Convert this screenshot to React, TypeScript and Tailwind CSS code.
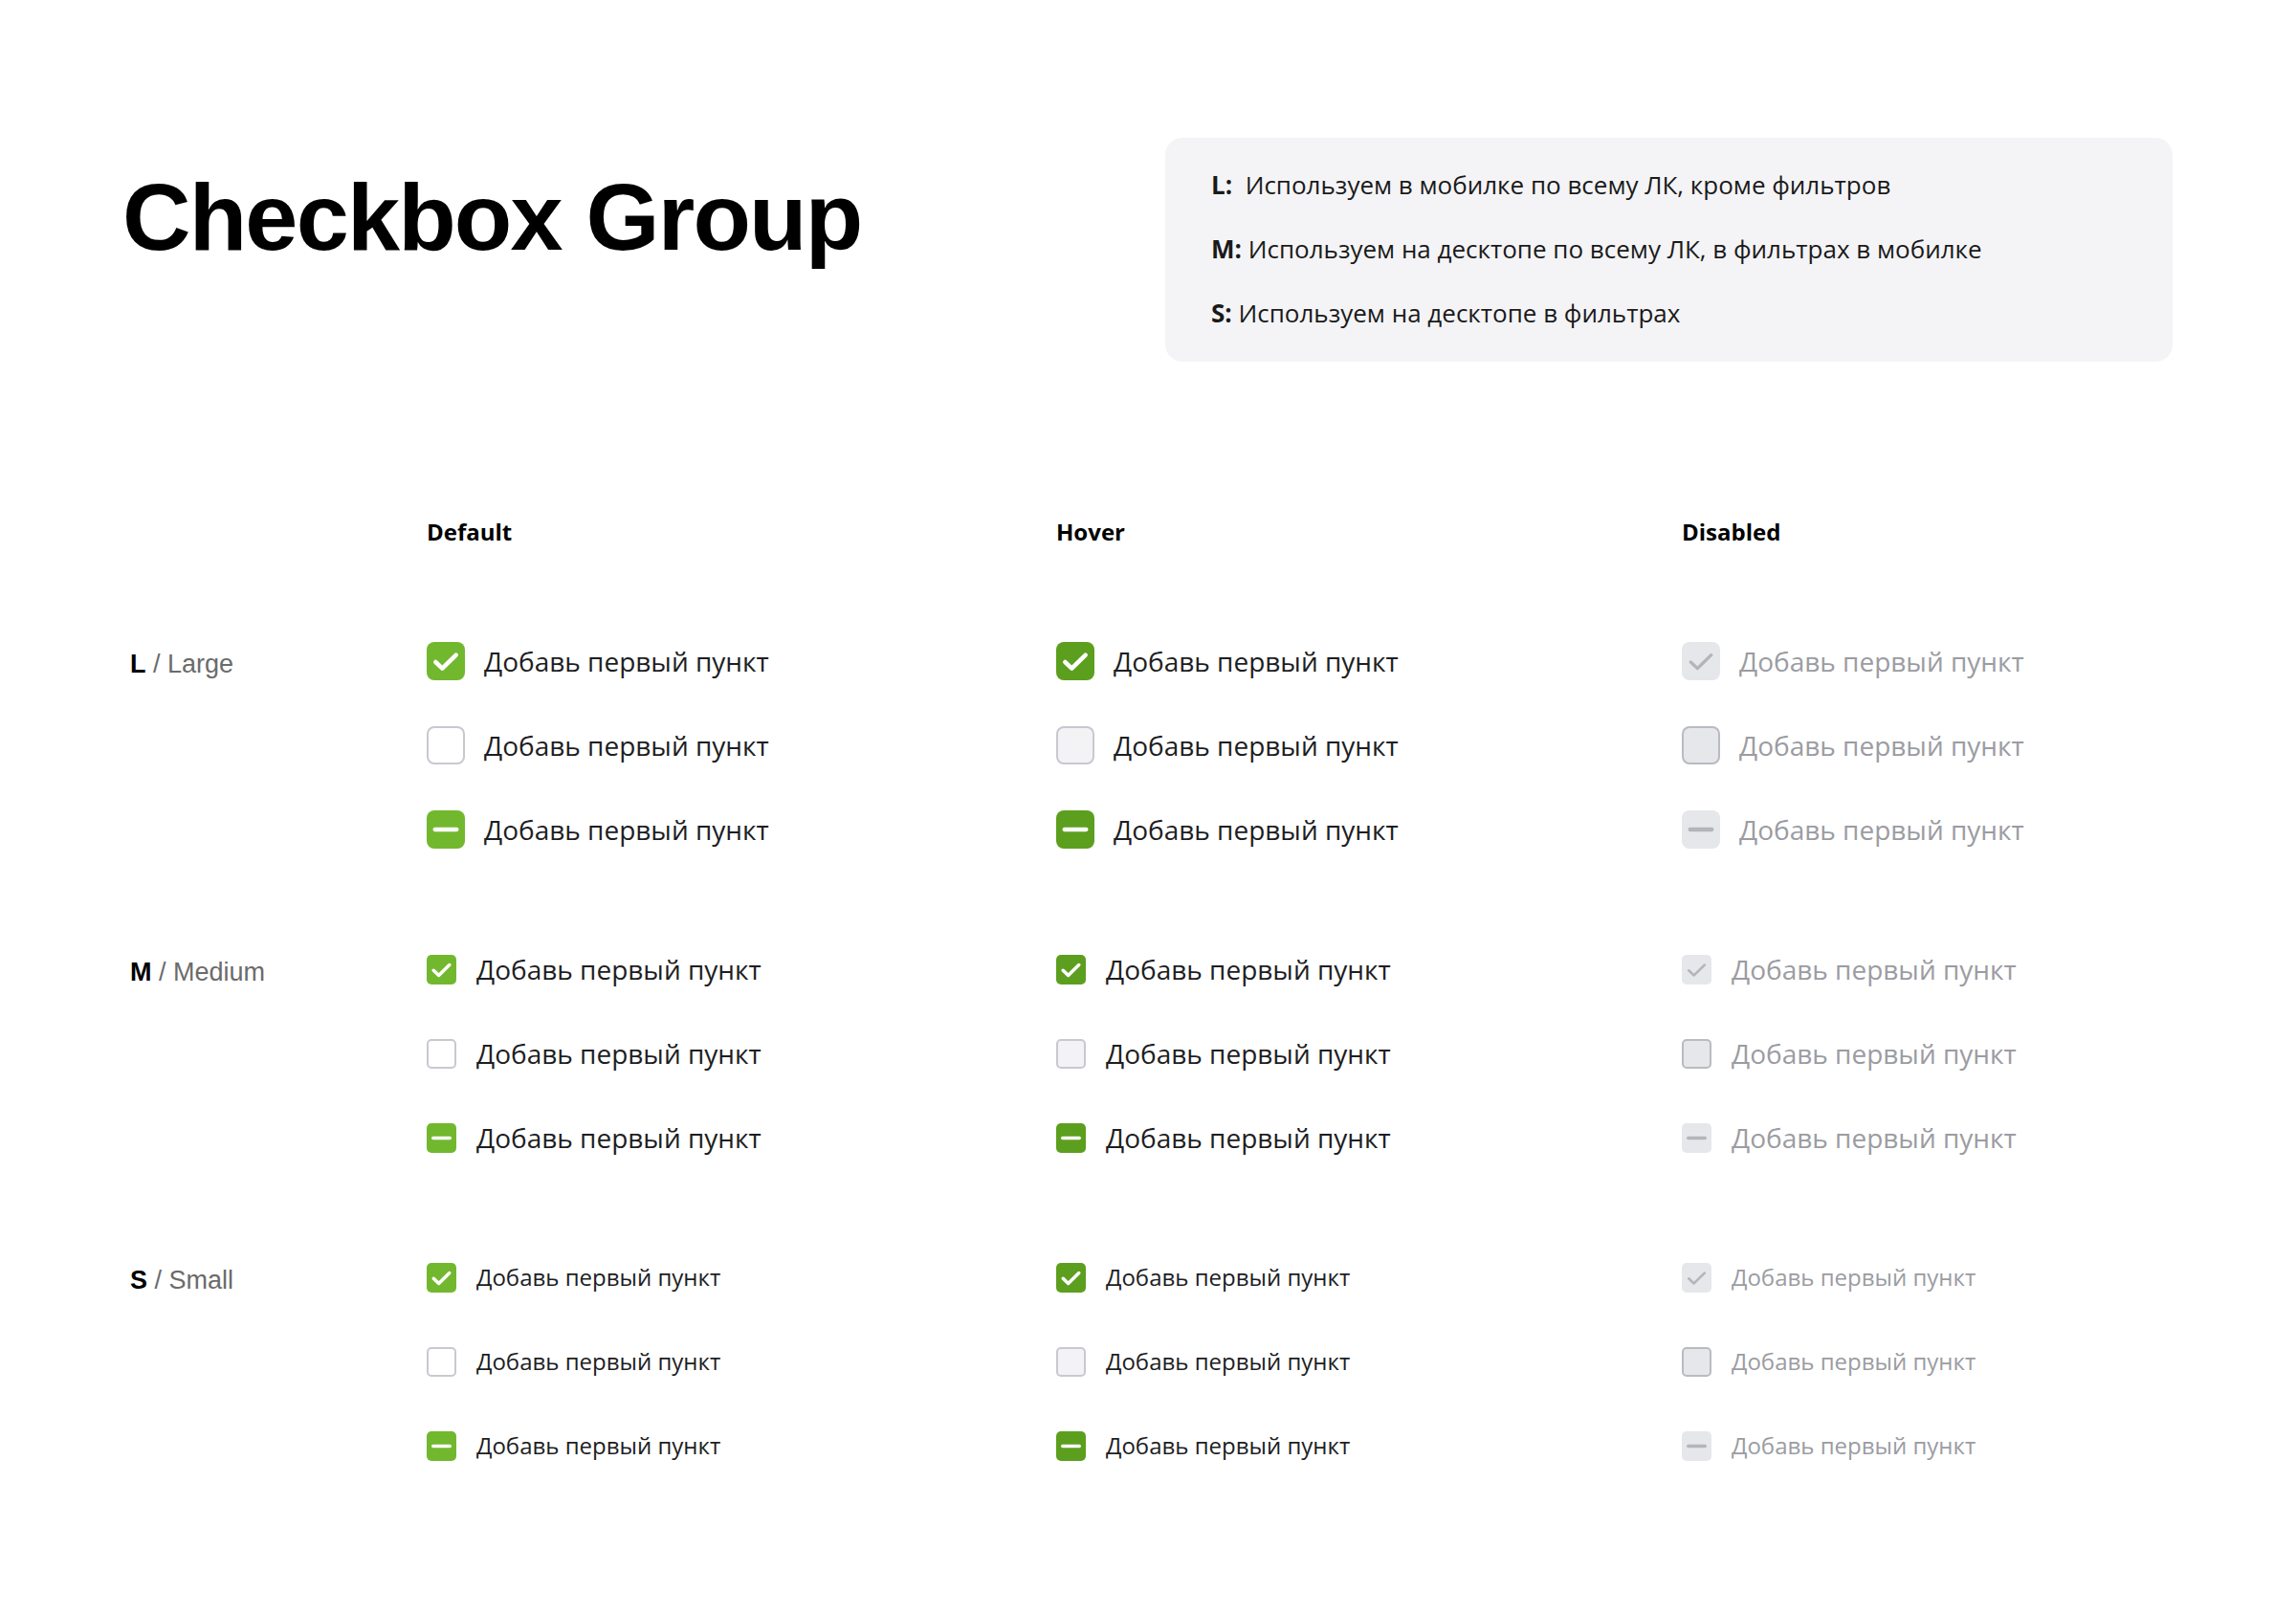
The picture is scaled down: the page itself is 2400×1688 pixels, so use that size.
import React from 'react';

type Size = 'L' | 'M' | 'S';
type State = 'default' | 'hover' | 'disabled';
type Kind = 'checked' | 'unchecked' | 'indeterminate';

const LABEL = 'Добавь первый пункт';

const boxSize: Record<Size, string> = {
  L: 'w-[40px] h-[40px] rounded-[8px]',
  M: 'w-[31px] h-[31px] rounded-[5px]',
  S: 'w-[31px] h-[31px] rounded-[5px]',
};

const textSize: Record<Size, string> = {
  L: 'text-[28px] gap-[20px]',
  M: 'text-[28px] gap-[21px]',
  S: 'text-[24px] gap-[21px]',
};

const boxStyle = (state: State, kind: Kind) => {
  if (state === 'disabled') {
    return kind === 'unchecked'
      ? 'bg-[#e6e7eb] border-2 border-[#b9bbc2]'
      : 'bg-[#e6e7eb]';
  }
  if (kind === 'unchecked') {
    return state === 'hover'
      ? 'bg-[#f3f3f6] border-2 border-[#c8c9d0]'
      : 'bg-white border-2 border-[#c8c9d0]';
  }
  return state === 'hover' ? 'bg-[#5c9f1f]' : 'bg-[#72b82e]';
};

const Checkbox = ({ size, state, kind }: { size: Size; state: State; kind: Kind }) => {
  const color = state === 'disabled' ? '#b3b5bb' : '#ffffff';
  const sw = state === 'disabled' ? 2 : 2.7;
  return (
    <div className={`flex items-center ${textSize[size]}`}>
      <div className={`flex-shrink-0 flex items-center justify-center ${boxSize[size]} ${boxStyle(state, kind)}`}>
        {kind === 'checked' && (
          <svg viewBox="0 0 24 24" className="w-full h-full" fill="none">
            <polyline
              points="5.6 12.6 9.8 16.6 18.4 8.2"
              stroke={color}
              strokeWidth={sw}
              strokeLinecap="round"
              strokeLinejoin="round"
            />
          </svg>
        )}
        {kind === 'indeterminate' && (
          <svg viewBox="0 0 24 24" className="w-full h-full" fill="none">
            <line x1="5.2" y1="12" x2="18.8" y2="12" stroke={color} strokeWidth={2.6} strokeLinecap="round" />
          </svg>
        )}
      </div>
      <span className={state === 'disabled' ? 'text-[#9b9ca2]' : 'text-[#1d1e23]'}>{LABEL}</span>
    </div>
  );
};

const kinds: Kind[] = ['checked', 'unchecked', 'indeterminate'];
const states: State[] = ['default', 'hover', 'disabled'];
const colWidth: Record<State, string> = {
  default: 'w-[658px]',
  hover: 'w-[654px]',
  disabled: 'flex-1',
};

const groups: { size: Size; name: string }[] = [
  { size: 'L', name: 'Large' },
  { size: 'M', name: 'Medium' },
  { size: 'S', name: 'Small' },
];

export default function App() {
  return (
    <div className="w-full min-h-[1688px] bg-white font-['Open_Sans',sans-serif]">
      <div className="flex items-start justify-between pt-[144px] pl-[128px] pr-[129px]">
        <h1 className="mt-[33px] font-['Liberation_Sans',Arial,sans-serif] font-bold text-[99px] leading-none tracking-[-1.8px] text-black">
          Checkbox Group
        </h1>
        <div className="w-[1053px] rounded-[18px] bg-[#f4f4f6] pl-[48px] pt-[31px] pb-[33px] flex flex-col gap-[31px] text-[26px] leading-[36px] text-[#1a1a1a]">
          <div>
            <span className="font-bold">L:</span>{'\u00A0\u00A0'}Используем в мобилке по всему ЛК, кроме фильтров
          </div>
          <div>
            <span className="font-bold">M:</span> Используем на десктопе по всему ЛК, в фильтрах в мобилке
          </div>
          <div>
            <span className="font-bold">S:</span> Используем на десктопе в фильтрах
          </div>
        </div>
      </div>

      <div className="pl-[136px] mt-[162px]">
        <div className="flex text-[24px] leading-[32px] font-bold text-black">
          <div className="w-[310px]" />
          <div className="w-[658px]">Default</div>
          <div className="w-[654px]">Hover</div>
          <div className="flex-1">Disabled</div>
        </div>

        <div className="mt-[75px] flex flex-col gap-[58px]">
          {groups.map((g) => (
            <div key={g.size} className="flex">
              <div className="w-[310px] h-[88px] pt-[6px] flex items-center font-['Liberation_Sans',Arial,sans-serif] text-[27px]">
                <span className="font-bold text-black">{g.size}</span>
                <span className="text-[#6b6b6b]">&nbsp;/ {g.name}</span>
              </div>
              {states.map((st) => (
                <div key={st} className={`${colWidth[st]} flex flex-col`}>
                  {kinds.map((k) => (
                    <div key={k} className="h-[88px] flex items-center">
                      <Checkbox size={g.size} state={st} kind={k} />
                    </div>
                  ))}
                </div>
              ))}
            </div>
          ))}
        </div>
      </div>
    </div>
  );
}
